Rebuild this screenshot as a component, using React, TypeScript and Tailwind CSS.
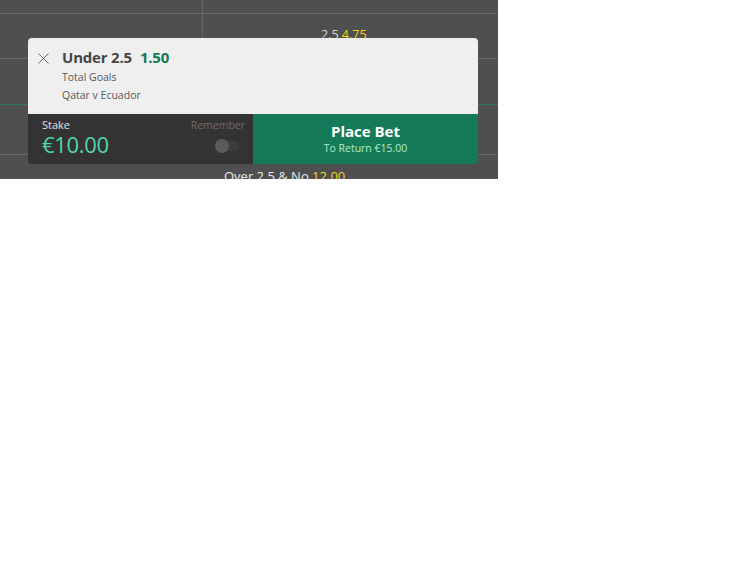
import React from "react";

const font = { fontFamily: '"Open Sans", "Noto Sans", sans-serif' };

function CloseIcon() {
  return (
    <svg width="11" height="11" viewBox="0 0 11 11" className="text-[#5a5a5a]">
      <path d="M0.5 0.5 L10.5 10.5 M10.5 0.5 L0.5 10.5" stroke="currentColor" strokeWidth="0.9" />
    </svg>
  );
}

function BetSlip() {
  return (
    <div className="absolute left-[28px] top-[38px] w-[450px] h-[126px] rounded overflow-hidden flex flex-col">
      {/* selection */}
      <div className="h-[76px] bg-[#efefef] flex pl-[10px] pt-[9px]">
        <div className="pt-[6px] w-[24px]">
          <CloseIcon />
        </div>
        <div className="flex flex-col">
          <div className="flex items-baseline gap-[8px] leading-5">
            <span className="text-[15px] font-bold tracking-[-0.2px] text-[#454545]">Under 2.5</span>
            <span className="text-[15px] font-bold tracking-[-0.2px] text-[#157a57]">1.50</span>
          </div>
          <span className="text-[10.5px] leading-[18px] text-[#595959] mt-[1px]">Total Goals</span>
          <span className="text-[10.5px] leading-[18px] text-[#595959]">Qatar v Ecuador</span>
        </div>
      </div>

      {/* stake + place bet */}
      <div className="h-[50px] flex">
        <div className="w-[225px] bg-[#333333] flex justify-between pl-[14px] pr-[8px] pt-[4px]">
          <div className="flex flex-col">
            <span className="text-[11px] leading-[14px] text-[#e2e2e2]">Stake</span>
            <span className="text-[22px] leading-6 font-normal tracking-[-0.3px] text-[#55d6a6]">€10.00</span>
          </div>
          <div className="flex flex-col items-end">
            <span className="text-[10.5px] leading-[14px] text-[#6b6b6b]">Remember</span>
            <div className="relative w-[24px] h-[10px] mt-[9px] mr-[6px] rounded-full bg-[#3d3d3d]">
              <div className="absolute left-0 -top-[2px] w-[14px] h-[14px] rounded-full bg-[#5c5c5c]" />
            </div>
          </div>
        </div>
        <div className="flex-1 bg-[#157a59] flex flex-col items-center justify-center pb-[2px]">
          <span className="text-[15px] leading-5 font-bold text-white">Place Bet</span>
          <span className="text-[10.5px] leading-[14px] text-[#a9efcf]">To Return €15.00</span>
        </div>
      </div>
    </div>
  );
}

export default function App() {
  return (
    <div className="min-h-screen bg-white" style={font}>
      <div className="relative w-[498px] h-[179px] bg-[#4f4f4f] overflow-hidden">
        {/* market grid behind the slip */}
        <div className="grid grid-cols-[203px_1fr] h-[14px] border-b border-[#676767]">
          <div className="border-r border-[#676767]" />
          <div />
        </div>
        <div className="grid grid-cols-[203px_1fr] h-[45px] border-b border-[#676767]">
          <div className="border-r border-[#676767]" />
          <div className="pl-[118px] pt-[13px] text-[12.5px] leading-4">
            <span className="text-[#d6d6d6]">2.5</span> <span className="text-[#f4d21c]">4.75</span>
          </div>
        </div>
        <div className="h-[46px] border-b border-[#2f7d5f]" />
        <div className="h-[50px] border-b border-[#676767]" />
        <div className="pl-[224px] pt-[13px] text-[13px] leading-4">
          <span className="text-[#e8e8e8]">Over 2.5 &amp; No</span> <span className="text-[#f4d21c]">12.00</span>
        </div>

        <BetSlip />
      </div>
    </div>
  );
}
